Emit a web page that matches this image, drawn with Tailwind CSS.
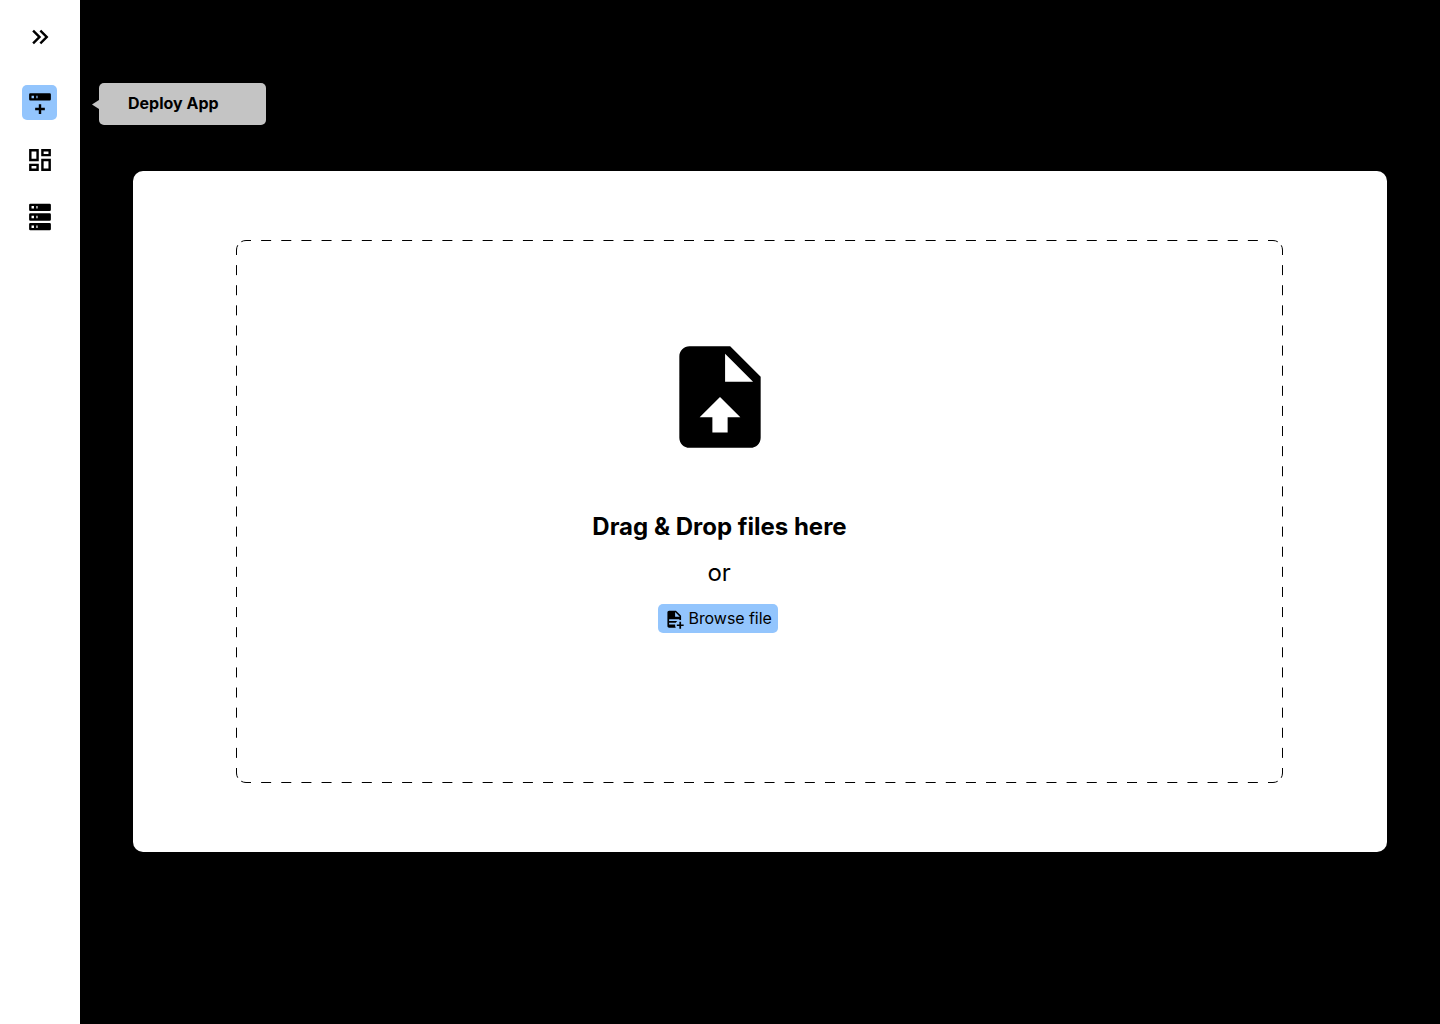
<!DOCTYPE html>
<html lang="en">
<head>
<meta charset="utf-8">
<title>Deploy App</title>
<script src="https://cdn.jsdelivr.net/npm/@tailwindcss/browser@4"></script>
</head>
<body class="flex h-screen overflow-hidden bg-black font-['Inter',sans-serif] text-black">
  <nav class="flex w-20 shrink-0 flex-col items-center bg-white pt-[22px]">
    <button class="size-[30px]" aria-label="Expand">
      <svg class="size-[30px]" viewBox="-0.4 -0.4 24.8 24.8"><path d="M5.59,7.41L7,6L13,12L7,18L5.59,16.59L10.17,12L5.59,7.41M11.59,7.41L13,6L19,12L13,18L11.59,16.59L16.17,12L11.59,7.41Z"/></svg>
    </button>
    <div class="relative mt-[33px]">
      <button class="mr-px block size-[35px] rounded-[5px] bg-[#93c5fd] p-[3px]" aria-label="Deploy App">
        <svg class="size-[30px] max-w-none" viewBox="-0.4 -0.4 24.8 24.8"><path d="M4,4H20A1,1 0 0,1 21,5V9A1,1 0 0,1 20,10H4A1,1 0 0,1 3,9V5A1,1 0 0,1 4,4M9,8H10V6H9V8M5,6V8H7V6H5M11,13H13V16H16V18H13V21H11V18H8V16H11V13Z"/></svg>
      </button>
      <div class="absolute top-[-2px] left-[70px] flex items-center">
        <svg class="mt-px h-[9px] w-[7px]" viewBox="0 0 7 9"><path fill="#c4c4c4" d="M0 4.5 7 0V9Z"/></svg>
        <div class="h-[42px] w-[167px] rounded-[5px] bg-[#c4c4c4] pl-[29px] text-base leading-[41px] font-bold whitespace-nowrap">Deploy App</div>
      </div>
    </div>
    <button class="mt-[25px] size-[30px]" aria-label="Dashboard">
      <svg class="size-[30px]" viewBox="-0.4 -0.4 24.8 24.8"><path d="M19,5V7H15V5H19M9,5V11H5V5H9M19,13V19H15V13H19M9,17V19H5V17H9M21,3H13V9H21V3M11,3H3V13H11V3M21,11H13V21H21V11M11,15H3V21H11V15Z"/></svg>
    </button>
    <button class="mt-[27px] size-[30px]" aria-label="Servers">
      <svg class="size-[30px]" viewBox="-0.4 -0.4 24.8 24.8"><path d="M4,1H20A1,1 0 0,1 21,2V6A1,1 0 0,1 20,7H4A1,1 0 0,1 3,6V2A1,1 0 0,1 4,1M4,9H20A1,1 0 0,1 21,10V14A1,1 0 0,1 20,15H4A1,1 0 0,1 3,14V10A1,1 0 0,1 4,9M4,17H20A1,1 0 0,1 21,18V22A1,1 0 0,1 20,23H4A1,1 0 0,1 3,22V18A1,1 0 0,1 4,17M9,5H10V3H9V5M9,13H10V11H9V13M9,21H10V19H9V21M5,3V5H7V3H5M5,11V13H7V11H5M5,19V21H7V19H5Z"/></svg>
    </button>
  </nav>

  <main class="flex-1 px-[53px] pt-[171px]">
    <section class="h-[681px] rounded-[10px] bg-white px-[103px] pt-[69px]">
      <div class="relative flex h-[543px] w-[1047px] flex-col items-center pt-[96px] pr-[80px]">
        <svg class="absolute inset-0 h-[543px] w-[1047px]" viewBox="0 0 1047 543" fill="none" stroke="#000">
          <path stroke-dasharray="10 10.137" stroke-dashoffset="5" d="M10 .5H1037"/>
          <path stroke-dasharray="10 10.137" stroke-dashoffset="5" d="M10 542.5H1037"/>
          <path stroke-dasharray="10 10.115" stroke-dashoffset="5" d="M.5 10V533"/>
          <path stroke-dasharray="10 10.115" stroke-dashoffset="5" d="M1046.5 10V533"/>
          <g stroke-dasharray="5 4.92">
            <path d="M.5 10A9.5 9.5 0 0 1 10 .5"/>
            <path d="M1037 .5A9.5 9.5 0 0 1 1046.5 10"/>
            <path d="M1046.5 533A9.5 9.5 0 0 1 1037 542.5"/>
            <path d="M10 542.5A9.5 9.5 0 0 1 .5 533"/>
          </g>
        </svg>
        <svg class="size-[122px] shrink-0" viewBox="0 0 24 24"><path d="M14,2H6C4.89,2 4,2.89 4,4V20C4,21.11 4.89,22 6,22H18C19.11,22 20,21.11 20,20V8L14,2M13.5,16V19H10.5V16H8L12,12L16,16H13.5M13,9V3.5L18.5,9H13Z"/></svg>
        <h1 class="mt-[54px] text-2xl leading-[29px] font-bold">Drag &amp; Drop files here</h1>
        <p class="mt-[17px] mr-px text-2xl leading-[29px] tracking-[-0.01em]">or</p>
        <button class="mt-[17px] mr-[3px] flex h-[29px] w-[120px] items-center rounded-[5px] bg-[#93c5fd] pl-[6px] text-base whitespace-nowrap">
          <svg class="mt-px mr-[4px] h-[20.5px] w-[20.5px] shrink-0" viewBox="0 0 24 24"><path d="M14,2H6C4.89,2 4,2.89 4,4V20C4,21.11 4.89,22 6,22H13.81C13.28,21.09 13,20.05 13,19C13,18.67 13.03,18.33 13.08,18H6V16H13.81C14.27,15.2 14.91,14.5 15.68,14H6V12H18V13.08C18.33,13.03 18.67,13 19,13S19.67,13.03 20,13.08V8L14,2M13,9V3.5L18.5,9H13M18,15V18H15V20H18V23H20V20H23V18H20V15H18Z"/></svg>
          <span class="mb-[2px] tracking-[-0.06px]">Browse file</span>
        </button>
      </div>
    </section>
  </main>
</body>
</html>
